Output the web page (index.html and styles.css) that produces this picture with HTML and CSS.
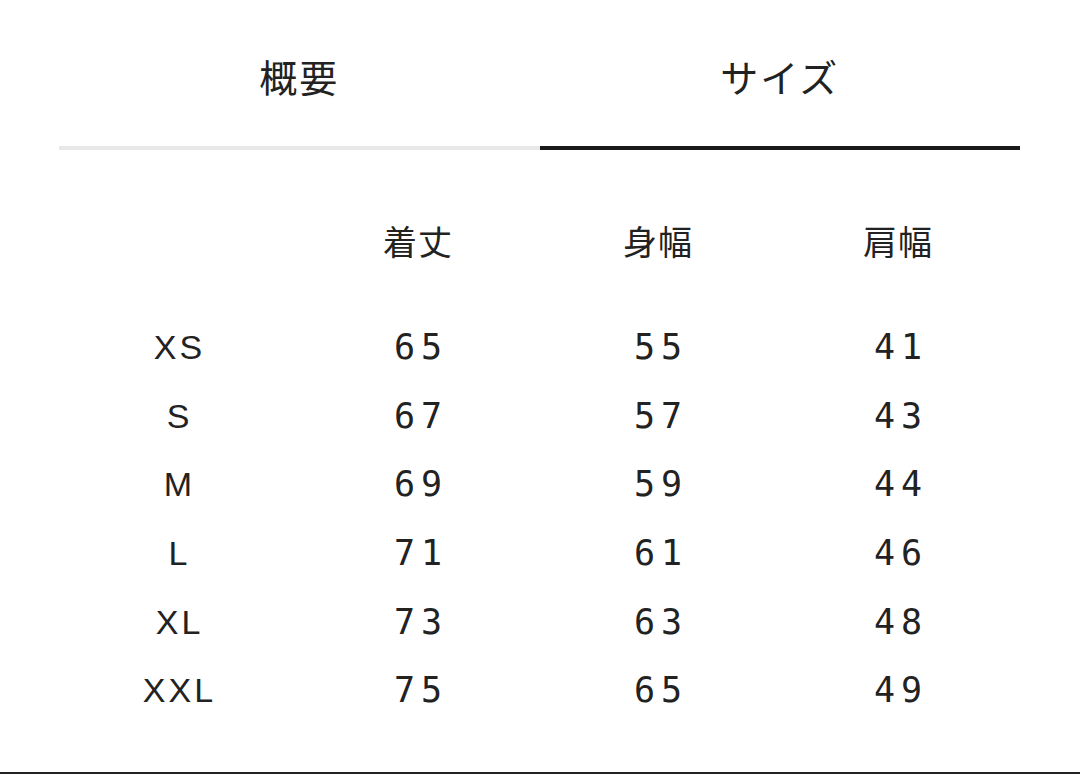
FILE: index.html
```html
<!DOCTYPE html>
<html lang="ja">
<head>
<meta charset="utf-8">
<link rel="stylesheet" href="styles.css">
</head>
<body>
<div class="page">
  <div class="tabs">
    <div class="tab">概要</div>
    <div class="tab active">サイズ</div>
  </div>
  <div class="table">
    <div class="row head">
      <div class="cell"></div>
      <div class="cell">着丈</div>
      <div class="cell">身幅</div>
      <div class="cell">肩幅</div>
    </div>
    <div class="body">
      <div class="row"><div class="cell size">XS</div><div class="cell num">65</div><div class="cell num">55</div><div class="cell num">41</div></div>
      <div class="row"><div class="cell size">S</div><div class="cell num">67</div><div class="cell num">57</div><div class="cell num">43</div></div>
      <div class="row"><div class="cell size">M</div><div class="cell num">69</div><div class="cell num">59</div><div class="cell num">44</div></div>
      <div class="row"><div class="cell size">L</div><div class="cell num">71</div><div class="cell num">61</div><div class="cell num">46</div></div>
      <div class="row"><div class="cell size">XL</div><div class="cell num">73</div><div class="cell num">63</div><div class="cell num">48</div></div>
      <div class="row"><div class="cell size">XXL</div><div class="cell num">75</div><div class="cell num">65</div><div class="cell num">49</div></div>
    </div>
  </div>
  <div class="bottom-line"></div>
</div>
</body>
</html>
```

FILE: styles.css
```css
html, body {
  margin: 0;
  padding: 0;
  background: #ffffff;
}
body {
  color: #222222;
  font-family: "Liberation Sans", "Noto Sans CJK JP", sans-serif;
}
.page {
  height: 774px;
  display: flex;
  flex-direction: column;
  overflow: hidden;
}
.tabs {
  display: flex;
  margin: 0 60px 0 59px;
}
.tab {
  flex: 1;
  height: 141px;
  padding-top: 5px;
  display: flex;
  align-items: center;
  justify-content: center;
  font-family: "Noto Sans CJK JP", sans-serif;
  font-size: 38px;
  letter-spacing: 2px;
  border-bottom: 4px solid #e8e8e8;
}
.tab.active {
  border-bottom-color: #1a1a1a;
}
.table {
  margin: 57px 0 0 58px;
  width: 960px;
}
.row {
  display: grid;
  grid-template-columns: repeat(4, 240px);
  height: 68.6px;
  align-items: center;
}
.body {
  margin-top: 37.4px;
}
.cell {
  text-align: center;
  line-height: 40px;
}
.head .cell {
  font-family: "Noto Sans CJK JP", sans-serif;
  font-size: 34px;
  letter-spacing: 1px;
}
.size {
  font-family: "Liberation Sans", sans-serif;
  font-size: 34px;
  letter-spacing: 3px;
  text-indent: 3px;
}
.num {
  font-family: "DejaVu Sans Mono", monospace;
  font-size: 35px;
  letter-spacing: 6px;
  text-indent: 6px;
}
.bottom-line {
  margin-top: auto;
  height: 2px;
  background: #222222;
}
```
